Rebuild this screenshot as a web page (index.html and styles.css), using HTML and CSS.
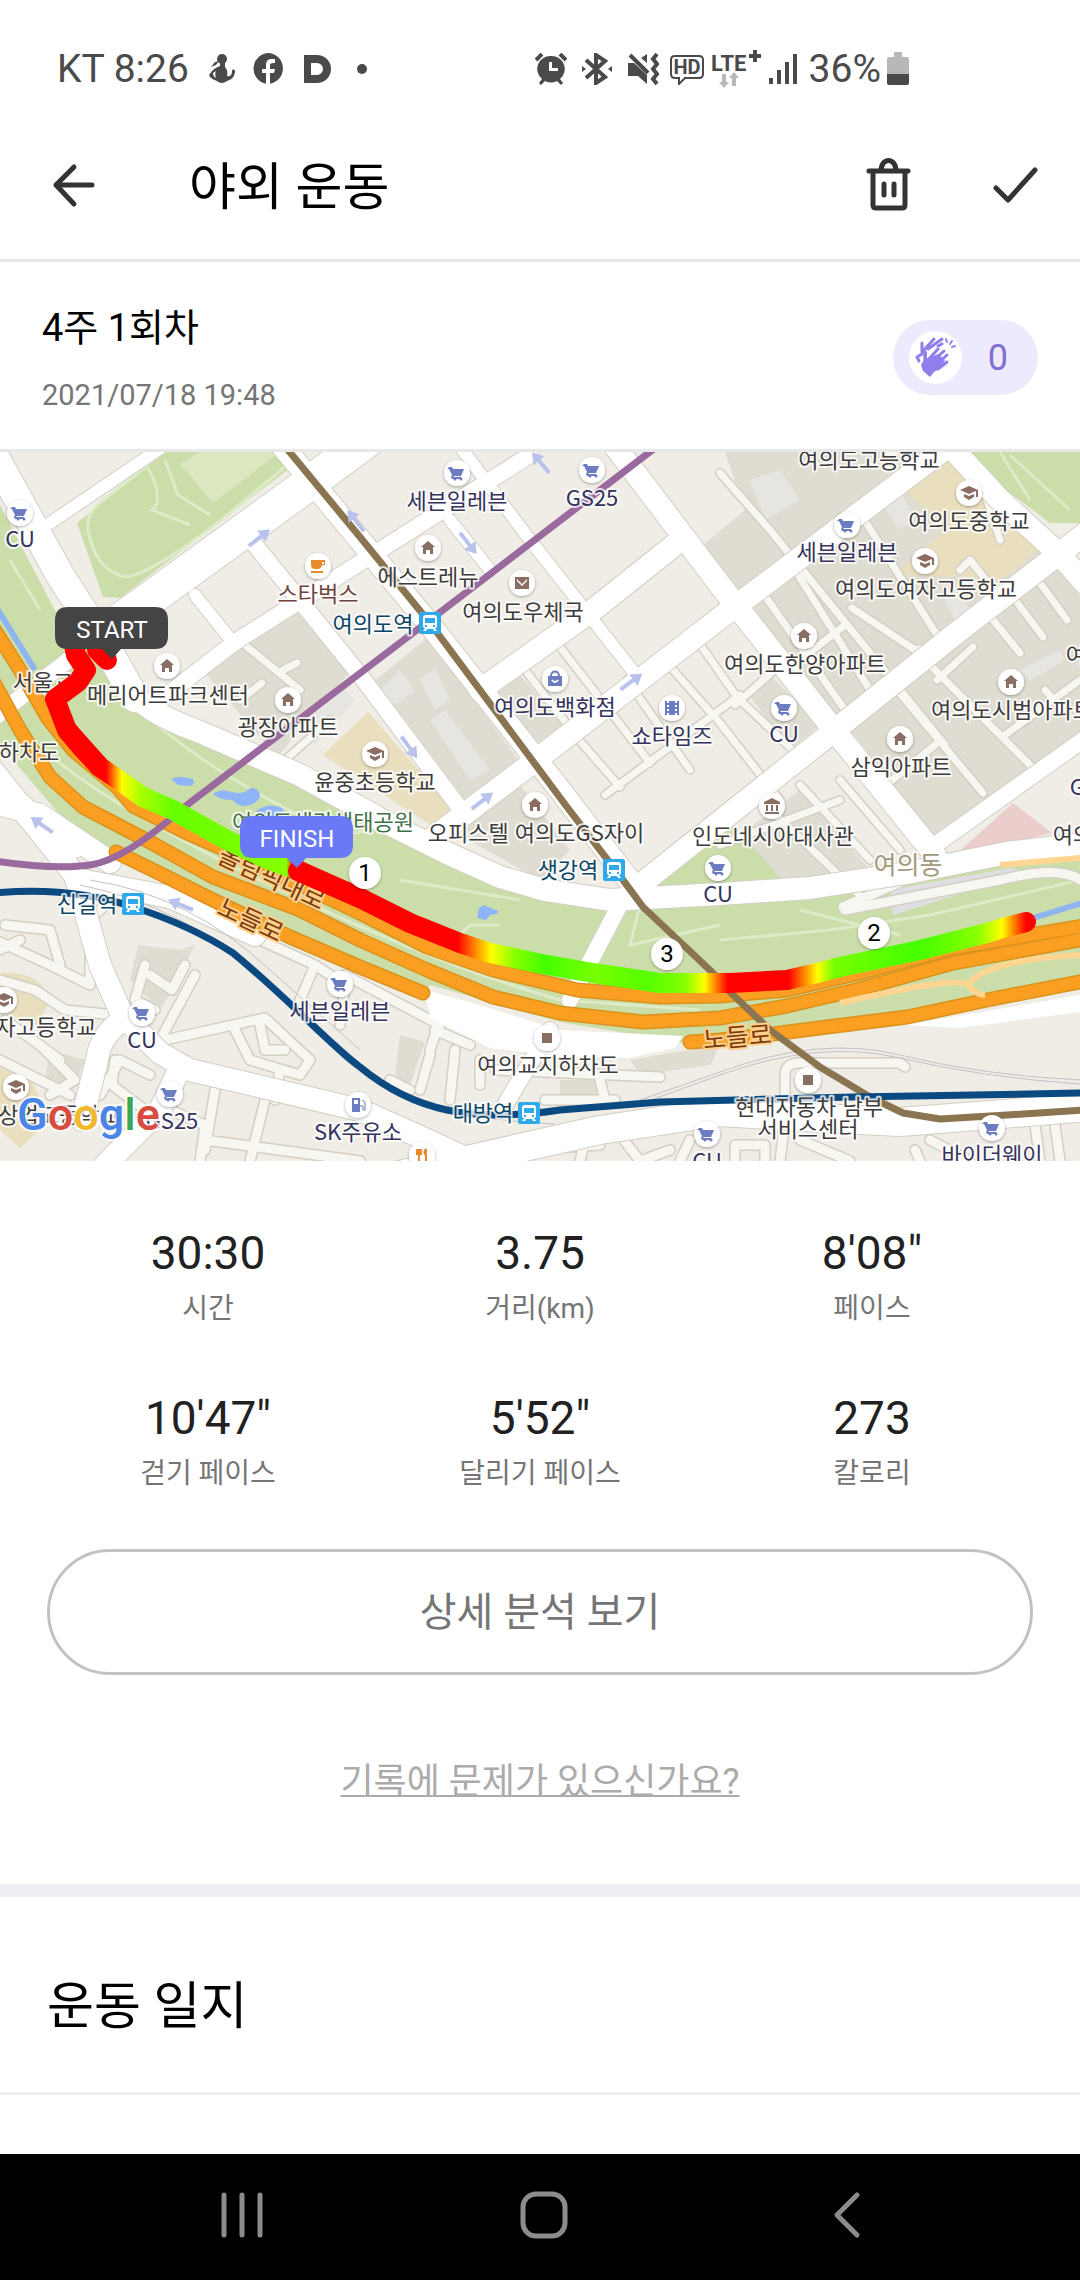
FILE: index.html
```html
<!DOCTYPE html>
<html lang="ko">
<head>
    <meta charset="UTF-8">
    <meta name="viewport" content="width=device-width, initial-scale=1.0">
    <title>야외 운동</title>
    <link rel="stylesheet" href="styles.css">
</head>
<body>
    <div class="status-bar">
        <div class="status-group">
            <span class="status-text">KT 8:26</span>
            <svg class="status-icon" width="32" height="32" viewBox="0 0 32 32">
                <circle cx="17" cy="6" r="5"/>
                <path d="M15 10h5v4c2 2 3 5 2 9 4 1 5-2 5-5 0-2 3-2 3 0 0 6-4 9-8 10-4 3-8 2-10 0-3-1-7-3-8-6 3-5 7-8 11-9zM8 20c0 2 1 4 3 5-1-3-1-5 0-7z"/>
                <path d="M6 14l4-5 4-1-3 4z"/>
            </svg>
            <svg class="status-icon" width="32" height="32" viewBox="0 0 32 32">
                <path d="M16 0a15.500 15.500 0 0 0-3 30.700V20H9v-4h4v-4c0-4 2-6 6-6h3v4h-2c-2 0-3 1-3 2v4h5l-1 4h-4v10.700A15.500 15.500 0 0 0 16 0z"/>
            </svg>
            <svg class="status-icon" width="32" height="32" viewBox="0 0 32 32">
                <path fill-rule="evenodd" d="M3 2h13a14 14 0 0 1 0 28H3zM10 10v12h6a6 6 0 0 0 0-12z"/>
            </svg>
            <svg class="status-icon" width="32" height="32" viewBox="0 0 32 32"><circle cx="13" cy="16" r="5"/></svg>
        </div>
        <div class="status-group status-right">
            <svg class="status-icon" width="32" height="32" viewBox="0 0 32 32">
                <path fill-rule="evenodd" d="M16 3a13 13 0 0 1 9 23l3 4-2 2-4-4a13 13 0 0 1-12 0l-4 4-2-2 3-4A13 13 0 0 1 16 3zm-2 6v9h9v-3h-6V9z"/>
                <path class="line" d="M1 7l6-6M31 7l-6-6"/>
            </svg>
            <svg class="status-icon" width="32" height="32" viewBox="0 0 32 32">
                <path class="line" d="M5 7l19 17-9 6V2l9 6L5 25"/>
                <path d="M1 13l4 3-4 3zM31 13l-4 3 4 3z"/>
            </svg>
            <svg class="status-icon" width="32" height="32" viewBox="0 0 32 32">
                <path d="M1 10h6l13 12v9l-9-8H1zM20 1v9l-6-5z"/>
                <path class="line" d="M3 2l18 18M30 1l-4 5 4 5-4 5 4 5-4 5 4 5"/>
            </svg>
        </div>
        <div class="status-group status-tight">
            <svg class="status-icon" width="36" height="32" viewBox="0 0 36 32">
                <path class="thin" d="M6 3h24q4 0 4 4v14q0 4-4 4H16l-6 6v-6H6q-4 0-4-4V7q0-4 4-4z"/>
                <text class="hd-text" x="18" y="21">HD</text>
            </svg>
            <svg class="status-icon" width="50" height="40" viewBox="0 0 50 40">
                <text class="lte-text" x="0" y="22">LTE</text>
                <path class="line" d="M38 7h12M44 1v12"/>
                <path class="faded" d="M11 25h4v8h3l-5 6-5-6h3zM21 37h4v-8h3l-5-6-5 6h3z"/>
            </svg>
            <svg class="status-icon" width="36" height="32" viewBox="0 0 36 32">
                <path class="line" d="M4 31v-6M12 31V17M20 31V9M28 31V1"/>
            </svg>
            <span class="status-text">36%</span>
            <svg class="status-icon" width="22" height="34" viewBox="0 0 22 34">
                <path class="faded" d="M7 0h8v5h5q2 0 2 2v16H0V7q0-2 2-2h5z"/>
                <path d="M0 22h22v9q0 2-2 2H2q-2 0-2-2z"/>
            </svg>
        </div>
    </div>

    <header class="app-bar">
        <button type="button" class="icon-button" aria-label="뒤로">
            <svg width="55" height="55" viewBox="0 0 55 55"><path d="M46 27H10M28 9L10 27l18 19"/></svg>
        </button>
        <h1>야외 운동</h1>
        <button type="button" class="icon-button" aria-label="삭제">
            <svg width="55" height="55" viewBox="0 0 55 55"><path d="M8 13h39M12 13v34q0 3 3 3h26q3 0 3-3V13M20 13c0-14 15-14 15 0M23 26v11M33 26v11"/></svg>
        </button>
        <button type="button" class="icon-button" aria-label="확인">
            <svg width="55" height="55" viewBox="0 0 55 55"><path d="M8 30l12 12 27-30"/></svg>
        </button>
    </header>

    <main>
        <section class="summary">
            <div>
                <h2>4주 1회차</h2>
                <p class="date">2021/07/18 19:48</p>
            </div>
            <button type="button" class="clap">
                <svg width="53" height="53" viewBox="0 0 53 53">
                    <circle cx="26.500" cy="26.500" r="26.500" fill="#fff"/>
                    <path d="M14 21q2-3 4 0v7l11-5 7 6-4 8-7 4-4 5-7-6-2-6 3-5z" fill="#927fee"/>
                    <g fill="none" stroke="#927fee" stroke-width="3" stroke-linecap="round" stroke-linejoin="round">
                        <path d="M19 29l10-11M23 31l12-11M27 34l11-10M29 38l9-7M16 32v-11"/>
                        <path d="M10 30l-2-4 5-3M13 22V12M14 20L25 8M19 18L33 8M29 15l4-2"/>
                        <path d="M38 11l-1-3M41 13l2-3M43 16l3-1" stroke-width="2"/>
                    </g>
                </svg>
                <span>0</span>
            </button>
        </section>

        <svg class="map" viewBox="0 452 1080 709" role="img" aria-label="운동 경로 지도">
            <defs>
                <linearGradient id="pace" gradientUnits="userSpaceOnUse" x1="0" y1="0" x2="1080" y2="0">
                    <stop offset="0.098" stop-color="#f00"/>
                    <stop offset="0.113" stop-color="#ff0"/>
                    <stop offset="0.130" stop-color="#af0"/>
                    <stop offset="0.160" stop-color="#6f0"/>
                    <stop offset="0.265" stop-color="#8f0"/>
                    <stop offset="0.272" stop-color="#f00"/>
                    <stop offset="0.424" stop-color="#f00"/>
                    <stop offset="0.442" stop-color="#f90"/>
                    <stop offset="0.455" stop-color="#ff0"/>
                    <stop offset="0.477" stop-color="#8f0"/>
                    <stop offset="0.505" stop-color="#4f0"/>
                    <stop offset="0.550" stop-color="#7f0"/>
                    <stop offset="0.600" stop-color="#5f0"/>
                    <stop offset="0.635" stop-color="#8f0"/>
                    <stop offset="0.652" stop-color="#ff0"/>
                    <stop offset="0.674" stop-color="#f00"/>
                    <stop offset="0.730" stop-color="#f00"/>
                    <stop offset="0.745" stop-color="#f80"/>
                    <stop offset="0.757" stop-color="#ff0"/>
                    <stop offset="0.772" stop-color="#7f0"/>
                    <stop offset="0.850" stop-color="#4f0"/>
                    <stop offset="0.905" stop-color="#8f0"/>
                    <stop offset="0.928" stop-color="#ff0"/>
                    <stop offset="0.950" stop-color="#f00"/>
                </linearGradient>
                <filter id="shadow" x="-50%" y="-50%" width="200%" height="200%">
                    <feDropShadow dx="0" dy="1" stdDeviation="1.500" flood-opacity="0.350"/>
                </filter>

                <circle id="disc" r="13" fill="#fff" filter="url(#shadow)"/>
                <g id="cart">
                    <use href="#disc"/>
                    <path fill="#6c7cc0" d="M-8-6h3l1 2h11l-3 7h-7l-1 1h8v2h-9l-1-2 1-2-3-6h-2z"/>
                    <circle cx="-2" cy="6" r="1.500" fill="#6c7cc0"/><circle cx="4" cy="6" r="1.500" fill="#6c7cc0"/>
                </g>
                <g id="home"><use href="#disc"/><path fill="#8a6d63" d="M0-7l7 6H5v7H2V2h-4v4h-3v-7h-2z"/></g>
                <g id="school"><use href="#disc"/><path fill="#8a6d63" d="M0-7l9 4v7H7v-6L0 1l-9-4zM-5 1l5 2 5-2v3L0 7l-5-3z"/></g>
                <g id="place"><use href="#disc"/><path fill="#8a6d63" d="M-5-5H5V5H-5z"/></g>
                <g id="mail"><use href="#disc"/><path fill="#8a6d63" fill-rule="evenodd" d="M-7-6H7V6H-7zM-5-4l5 5 5-5v2L0 3l-5-5z"/></g>
                <g id="museum"><use href="#disc"/><path fill="#8a6d63" d="M0-8l8 4v2H-8v-2zM-6-1h2v6h-2zM-1-1h2v6h-2zM4-1h2v6H4zM-7 6H7v2H-7z"/></g>
                <g id="bag"><use href="#disc"/><path fill="#6c7cc0" d="M-7-3H7V7H-7z"/><path d="M-4-3c0-6 8-6 8 0" fill="none" stroke="#6c7cc0" stroke-width="2"/><path d="M-3 1q3 4 6 0" fill="none" stroke="#fff" stroke-width="2"/></g>
                <g id="film"><use href="#disc"/><path fill="#6c7cc0" fill-rule="evenodd" d="M-7-7h2v2h2v-2h6v2h2v-2h2V7H5V5H3v2h-6V5h-2v2h-2zM-5-3v2h2v-2zM-5 1v2h2V1zM3-3v2h2v-2zM3 1v2h2V1z"/></g>
                <g id="coffee"><use href="#disc"/><path fill="#e8892b" fill-rule="evenodd" d="M-7-6H7v5H4q-1 4-4 4h-3q-4 0-4-4zM4-4v2h2v-2zM-7 5H5v2H-7z"/></g>
                <g id="gas"><use href="#disc"/><path fill="#6c7cc0" fill-rule="evenodd" d="M-6-7h8V7h-8zM-4-5v4h4v-4z"/><path d="M2 1h3v4h2v-8L4-5" fill="none" stroke="#6c7cc0" stroke-width="1"/></g>
                <g id="food"><use href="#disc"/><path d="M-5-6v5h4v-5M-3-6V7M4-6V7M4-6q-3 3 0 7" fill="none" stroke="#e8892b" stroke-width="2"/></g>
                <g id="station">
                    <rect x="-11" y="-11" width="22" height="22" rx="2" fill="#2fa9ea"/>
                    <path fill="#fff" fill-rule="evenodd" d="M-4-8h8q3 0 3 3V3q0 2-2 2l2 3H4L3 6h-6l-1 2h-3l2-3q-2 0-2-2v-8q0-3 3-3zM-5-5v5H5v-5zM-5 2v2h2V2zM3 2v2h2V2z"/>
                </g>
                <path id="arrow" d="M-13-2H3v-5L14 0 3 7V2h-16z" fill="#b9c2ec"/>

                <!-- streets: drawn twice, casing first -->
                <g id="minor">
                    <path class="w8" d="M720 473L770 530 945 745M787 557L870 690M763 593L845 710M860 513L940 640M897 690L983 793M922 657L1035 770M1013 597L1043 637M1040 583L1067 620M993 620L1020 653M937 680L973 647M1045 690L1063 710M852 608L915 650 940 645M735 705L780 665M800 660L845 625M880 790L935 745M1005 735L1080 680"/>
                    <path class="w8" d="M560 647L650 763M573 733L620 787M627 680L690 770M667 663L720 723 780 800M697 640L737 697 803 760M525 670L577 737M605 795L740 695M720 845L840 800M760 800L865 900M800 785L870 860M840 780L900 850"/>
                    <path class="w8" d="M245 645L300 690M283 670L297 663M240 700L262 683M285 760L330 720M980 478L1000 540M960 570L970 560 990 585"/>
                    <path class="w10" d="M0 942L50 965 90 985 90 920 110 900M20 940L0 950M60 965L50 930 5 925M0 980L35 990 65 1010 115 1015M60 1060L5 1020M40 1045L75 1080 50 1095M0 1060L70 1095M100 1095L120 1060 150 1075M115 1060L112 1085 145 1110"/>
                    <path class="w10" d="M165 1040L210 1030 265 1018 310 1060 300 1075 250 1060 235 1030M280 1070L275 1100M260 1025L265 1050 285 1050M145 965L135 1000 155 1010M150 975L172 990 185 965M195 975L160 1040M215 1090L205 1150M180 1080L170 1110 205 1125 200 1161M265 1100L250 1161M205 1140L360 1161"/>
                    <path class="w10" d="M260 940L315 965 300 1000M315 965L345 985 340 1025M345 975L440 1025 435 1030 470 1045M440 1020L430 1050M430 1055L420 1090M390 1080L410 1090M455 1050L450 1100M480 1060L480 1085M495 1070L660 1077M600 1080L605 1100M545 1100L615 1100M585 1140L580 1161M620 1135L640 1161M520 1150L600 1145M670 1150L640 1161"/>
                    <path class="w10" d="M785 1110V1075Q785 1063 800 1063H900L905 1067M843 907L905 880M845 910L1000 880Q1060 865 1080 880M780 1161L785 1120M800 1140L850 1161M930 1140L970 1161M1035 1125L1040 1161M1055 1125L1060 1161M915 1150L920 1161M680 1161L690 1140M735 1161V1145H765V1161"/>
                </g>
                <g id="major">
                    <path class="w28" d="M-20 430L60 575 108 650 135 698"/>
                    <path class="w22" d="M130 690Q145 712 200 732L300 775 393 826 447 853 500 877 545 890 610 900 720 894 810 888 907 873 1007 853 1090 843"/>
                    <path class="w34" d="M118 622L300 490 370 438"/>
                    <path class="w12" d="M50 523L165 445M195 595L235 645M450 520L490 570M455 440L530 540 640 680"/>
                    <path class="w16" d="M160 700L235 642 530 455M255 545L360 675 465 815M935 845L1090 735M550 1030L505 1105M625 895L570 1000"/>
                    <path class="w22" d="M480 690L593 610 677 543M430 840L527 767 720 618 950 445M640 885L835 730 960 630 1090 530M265 425L430 625 560 790 635 888M605 433L720 585 830 725 935 855M935 430L1000 500 1060 555 1100 600"/>
                    <path class="w16" d="M-5 717L75 655M-20 750L20 800 75 850"/>
                    <path class="w22" d="M-10 802L40 815 110 862M-10 770L75 875 100 965 122 1015 160 1053 190 1070 360 1110 427 1140 480 1165M80 880L170 897 255 935M125 1018Q100 1035 97 1060L82 1120M180 1068L160 1110 105 1165"/>
                    <path class="w28" d="M400 1175L600 1130 720 1112 820 1118 900 1122 1090 1107"/>
                </g>
                <g id="highway">
                    <path class="w12" d="M-15 615L20 670 47 717 73 750 117 787 133 806 187 833 240 856 360 913 427 947 493 970 577 990 660 997 720 996 787 990 860 973 953 948 1090 925"/>
                    <path class="w12" d="M-12 672L20 730 50 777 83 807 150 842 213 877 300 910 360 940 427 970 493 997 560 1013 643 1022 720 1018 787 1006 860 989 953 963 1090 938"/>
                    <path class="w12" d="M116 852L167 877 213 900 290 937 360 967 423 993"/>
                    <path class="w12" d="M690 1042L720 1040 773 1034 827 1027 907 1017 987 1000 1090 980"/>
                </g>
            </defs>

            <rect class="land" y="452" width="1080" height="709"/>

            <!-- blocks and parks -->
            <g class="estate">
                <path d="M725 452H935L740 600 700 548 745 510z"/>
                <path d="M745 602L950 455 1080 575V740L930 845 840 735z"/>
                <path d="M366 688L428 637 522 765 470 808z"/>
                <path d="M200 667L290 603 350 672 277 757z"/>
                <path d="M497 690L520 675 565 728 530 748z"/>
                <path d="M745 690L770 675 820 725 790 750zM720 850L800 790 870 870 780 882z"/>
                <path d="M450 830L520 785 570 850 540 880z"/>
                <path d="M138 945L180 950 195 945 175 985 160 1010 130 980zM50 1050L85 1060 70 1095 45 1080zM400 1035L425 1042 410 1085 395 1075zM560 1080H600V1100H560zM630 1060L720 1045 710 1065 640 1075z"/>
            </g>
            <g class="buildings">
                <path d="M380 690L400 670 415 690 395 705zM420 680L435 668 450 700 435 710zM430 720L445 710 490 770 470 780zM300 725L345 690 355 700 315 745zM750 480L780 470 800 500 765 520zM880 500L900 490 915 520 900 530zM855 735L885 775 875 785 850 745zM1020 670L1060 650 1065 660 1030 680zM945 600L960 590 970 610 955 622z"/>
            </g>
            <g class="school-ground">
                <path d="M323 755L368 712 455 812 435 828z"/>
                <path d="M895 478L950 452 1042 547 1003 578 895 575 945 530z"/>
                <path d="M0 973Q40 970 50 1000L37 1027 0 1010zM0 1067L33 1083 50 1120 20 1148 0 1130z"/>
            </g>
            <path fill="#ebcdcc" d="M953 857L1013 803 1052 833z"/>
            <g class="park">
                <path d="M0 505L60 620 105 660 140 705 300 775 393 830 500 880 610 905 800 893 1010 855 1080 845V985L900 1022 700 1046 560 1022 430 985 420 998 290 945 110 852 60 815 0 745z"/>
                <path d="M77 523L165 452H293L290 468 120 598 103 597z"/>
                <path d="M963 452H1080V523H1050L1010 493z"/>
                <path d="M640 890L700 848 727 818 785 883z"/>
            </g>
            <path fill="#dce7c1" d="M180 464L200 452H280L213 503z"/>
            <path class="trail" d="M148 465L110 495Q85 510 88 530Q95 570 125 577Q165 572 290 462M148 468Q165 500 152 510L190 525M165 460L178 495 210 515M10 560L40 610M15 720Q60 780 240 870 420 960 560 1000L700 1010M130 700Q200 770 330 830 360 840 380 820M400 880L520 900M460 935L470 925 500 925M640 905L630 945 720 925M720 940L830 930 930 915 1080 880M800 910L900 935M1000 452L1030 500M1010 455L1070 510"/>
            <path fill="#dfdfe3" d="M890 890L1010 868 1030 872 893 915z"/>
            <g class="water">
                <path d="M171 779Q178 775 193 779 196 784 190 786L178 785zM213 794Q220 788 232 792 245 795 250 788 260 788 260 796 258 804 245 806 238 806 232 800 220 800 213 794zM256 811Q266 803 280 807 290 812 274 818L262 818zM479 908L484 905 498 911Q500 914 490 915L486 920 477 918z"/>
            </g>
            <path class="stream" d="M-5 605L35 670M1030 919L1085 902"/>

            <use href="#minor" class="casing"/>
            <use href="#minor" class="fill-minor"/>
            <use href="#major" class="casing"/>
            <use href="#major" class="fill-major"/>
            <path fill="#fff" d="M425 990L473 1003 560 1030 683 1036 675 1048 630 1058 560 1056 490 1048 430 1018zM905 1025L1080 995V1012L960 1028z"/>
            <use href="#highway" class="casing-orange"/>
            <use href="#highway" class="fill-orange"/>
            <path class="ramp" d="M840 1003Q960 975 968 985T985 995M968 985Q985 960 1080 955M1000 865L1080 858"/>

            <!-- rail -->
            <path class="rail" d="M80 885Q180 905 260 975L345 1060Q420 1120 555 1124M90 880Q190 895 270 970L360 1050M640 1100L720 1072Q820 1035 900 1055T1080 1080M640 1104L720 1075Q820 1039 900 1058T1080 1084"/>
            <path class="metro brown" d="M288 450L360 537 430 623 567 807 623 880 643 907 713 973 730 992 770 1030 820 1067 870 1097 903 1113 940 1119 1007 1115 1085 1110"/>
            <path class="metro blue" d="M-5 893Q70 886 133 907Q190 925 233 953C290 1000 330 1045 360 1067Q400 1100 447 1110T560 1110L660 1102 853 1097 1085 1093"/>
            <path class="metro purple" d="M655 448L430 620 183 808Q125 860 90 865T-5 861"/>

            <use href="#arrow" transform="translate(259 538) rotate(-38)"/>
            <use href="#arrow" transform="translate(541 463) rotate(-130)"/>
            <use href="#arrow" transform="translate(468 543) rotate(52)"/>
            <use href="#arrow" transform="translate(631 682) rotate(-36)"/>
            <use href="#arrow" transform="translate(409 747) rotate(54)"/>
            <use href="#arrow" transform="translate(482 801) rotate(-38)"/>
            <use href="#arrow" transform="translate(356 521) rotate(-128)"/>
            <use href="#arrow" transform="translate(42 825) rotate(-145)"/>
            <use href="#arrow" transform="translate(181 905) rotate(-158)"/>

            <g>
                <use href="#cart" x="20" y="513"/>
                <use href="#cart" x="457" y="473"/>
                <use href="#cart" x="592" y="470"/>
                <use href="#cart" x="847" y="525"/>
                <use href="#cart" x="784" y="708"/>
                <use href="#cart" x="718" y="868"/>
                <use href="#cart" x="340" y="984"/>
                <use href="#cart" x="142" y="1013"/>
                <use href="#cart" x="170" y="1094"/>
                <use href="#cart" x="707" y="1134"/>
                <use href="#cart" x="992" y="1128"/>
                <use href="#coffee" x="318" y="566"/>
                <use href="#home" x="167" y="666"/>
                <use href="#home" x="288" y="700"/>
                <use href="#home" x="428" y="548"/>
                <use href="#home" x="804" y="636"/>
                <use href="#home" x="1011" y="682"/>
                <use href="#home" x="900" y="739"/>
                <use href="#home" x="535" y="805"/>
                <use href="#mail" x="522" y="583"/>
                <use href="#bag" x="555" y="679"/>
                <use href="#film" x="672" y="708"/>
                <use href="#school" x="375" y="754"/>
                <use href="#school" x="969" y="493"/>
                <use href="#school" x="925" y="561"/>
                <use href="#school" x="4" y="1000"/>
                <use href="#school" x="16" y="1087"/>
                <use href="#museum" x="772" y="806"/>
                <use href="#place" x="547" y="1038"/>
                <use href="#place" x="808" y="1080"/>
                <use href="#gas" x="358" y="1105"/>
                <use href="#food" x="422" y="1155"/>
                <use href="#station" x="430" y="623"/>
                <use href="#station" x="614" y="870"/>
                <use href="#station" x="133" y="904"/>
                <use href="#station" x="529" y="1113"/>
            </g>

            <g class="label">
                <text x="869" y="468">여의도고등학교</text>
                <text x="969" y="529">여의도중학교</text>
                <text x="926" y="597">여의도여자고등학교</text>
                <text x="805" y="672">여의도한양아파트</text>
                <text x="1012" y="718">여의도시범아파트</text>
                <text x="901" y="775">삼익아파트</text>
                <text x="1096" y="663">여의도</text>
                <text x="1083" y="843">여의도</text>
                <text x="428" y="585">에스트레뉴</text>
                <text x="523" y="620">여의도우체국</text>
                <text x="375" y="790">윤중초등학교</text>
                <text x="43" y="690">서울교</text>
                <text x="168" y="703">메리어트파크센터</text>
                <text x="288" y="735">광장아파트</text>
                <text x="29" y="760">하차도</text>
                <text x="536" y="841">오피스텔 여의도GS자이</text>
                <text x="773" y="844">인도네시아대사관</text>
                <text x="46" y="1035">자고등학교</text>
                <text x="59" y="1123">상업고등학교</text>
                <text x="548" y="1073">여의교지하차도</text>
                <text x="809" y="1115">현대자동차 남부</text>
                <text x="808" y="1137">서비스센터</text>
            </g>
            <g class="label shop">
                <text x="20" y="547">CU</text>
                <text x="457" y="509">세븐일레븐</text>
                <text x="592" y="506">GS25</text>
                <text x="555" y="715">여의도백화점</text>
                <text x="672" y="744">쇼타임즈</text>
                <text x="847" y="560">세븐일레븐</text>
                <text x="784" y="742">CU</text>
                <text x="1096" y="795">GS25</text>
                <text x="718" y="902">CU</text>
                <text x="340" y="1019">세븐일레븐</text>
                <text x="142" y="1048">CU</text>
                <text x="172" y="1129">GS25</text>
                <text x="358" y="1140">SK주유소</text>
                <text x="707" y="1169">CU</text>
                <text x="992" y="1163">바이더웨이</text>
            </g>
            <g class="label transit">
                <text x="373" y="632">여의도역</text>
                <text x="568" y="878">샛강역</text>
                <text x="87" y="912">신길역</text>
                <text x="483" y="1121">대방역</text>
            </g>
            <text class="label food-name" x="318" y="602">스타벅스</text>
            <text class="label park-name" x="323" y="830">여의도샛강생태공원</text>
            <text class="label district" x="908" y="874">여의동</text>
            <g class="label road-name">
                <text transform="translate(268 886) rotate(25)">올림픽대로</text>
                <text transform="translate(247 928) rotate(25)">노들로</text>
                <text transform="translate(738 1046) rotate(-5)">노들로</text>
            </g>

            <!-- recorded route -->
            <path class="route" stroke="#f00" d="M73 640L76 655 86 670 78 682 55 699 67 730 100 767M97 650L107 660"/>
            <path class="route" stroke="url(#pace)" d="M67 730L82 748 100 767 123 783 143 797 173 810 227 840 267 859 300 871 360 898 410 923 460 943 490 953 537 963 593 973 660 983 703 983 730 983 787 980 817 973 840 967 920 950 987 933 1003 928 1026 922"/>
            <path class="route" stroke="#f00" d="M298 871L360 898"/>

            <g class="km">
                <circle cx="365" cy="873" r="16"/><text x="365" y="881">1</text>
                <circle cx="874" cy="933" r="16"/><text x="874" y="941">2</text>
                <circle cx="667" cy="954" r="16"/><text x="667" y="962">3</text>
            </g>
            <g class="flag">
                <path fill="#444" d="M68 607H155Q168 607 168 620V636Q168 649 155 649H121L112 659 102 649H68Q55 649 55 636V620Q55 607 68 607z"/>
                <text x="112" y="638">START</text>
                <path fill="#6979f8" d="M253 816H340Q353 816 353 829V845Q353 858 340 858H306L297 868 287 858H253Q240 858 240 845V829Q240 816 253 816z"/>
                <text x="297" y="847">FINISH</text>
            </g>
            <text class="google" x="17" y="1130"><tspan fill="#4a86e8">G</tspan><tspan fill="#d94c3d">o</tspan><tspan fill="#f2b92c">o</tspan><tspan fill="#4a86e8">g</tspan><tspan fill="#3aa757">l</tspan><tspan fill="#d94c3d">e</tspan></text>
        </svg>

        <dl class="stats">
            <div><dd>30:30</dd><dt>시간</dt></div>
            <div><dd>3.75</dd><dt>거리(km)</dt></div>
            <div><dd>8'08"</dd><dt>페이스</dt></div>
            <div><dd>10'47"</dd><dt>걷기 페이스</dt></div>
            <div><dd>5'52"</dd><dt>달리기 페이스</dt></div>
            <div><dd>273</dd><dt>칼로리</dt></div>
        </dl>

        <div class="actions">
            <button type="button" class="detail-button">상세 분석 보기</button>
            <a href="#" class="report-link">기록에 문제가 있으신가요?</a>
        </div>

        <section class="diary">
            <h2>운동 일지</h2>
        </section>
    </main>

    <nav class="nav-bar">
        <button type="button" aria-label="최근 앱">
            <svg width="48" height="48" viewBox="0 0 48 48"><path d="M6 4v40M24 4v40M42 4v40"/></svg>
        </button>
        <button type="button" aria-label="홈">
            <svg width="48" height="48" viewBox="0 0 48 48"><rect x="3" y="3" width="42" height="42" rx="13"/></svg>
        </button>
        <button type="button" aria-label="뒤로">
            <svg width="48" height="48" viewBox="0 0 48 48"><path d="M34 4L14 24l20 20"/></svg>
        </button>
    </nav>
</body>
</html>
```

FILE: styles.css
```css
* {
    box-sizing: border-box;
}
body {
    margin: 0;
    min-height: 100vh;
    display: flex;
    flex-direction: column;
    background: #fff;
    color: #000;
    font-family: Roboto, "Noto Sans CJK KR", sans-serif;
}
h1, h2, p, dl, dd {
    margin: 0;
    font-weight: 400;
}
button {
    border: none;
    background: none;
    padding: 0;
    font-family: inherit;
    cursor: pointer;
}
svg {
    display: block;
    flex: none;
}

/* Phone status bar */
.status-bar {
    display: flex;
    align-items: center;
    gap: 10px;
    padding: 45px 171px 19px 57px;
    color: #4a4a4a;
}
.status-group {
    display: flex;
    align-items: center;
    gap: 16px;
}
.status-right {
    gap: 14px;
    margin-left: auto;
}
.status-tight {
    gap: 6px;
}
.status-text {
    font-size: 39px;
    line-height: 48px;
}
.status-icon {
    fill: #4a4a4a;
}
.status-icon .line {
    fill: none;
    stroke: #4a4a4a;
    stroke-width: 4;
}
.status-icon .thin {
    fill: none;
    stroke: #4a4a4a;
    stroke-width: 2;
}
.status-icon .faded {
    fill: #b8b8b8;
}
.hd-text {
    font-size: 20px;
    font-weight: 700;
    text-anchor: middle;
}
.lte-text {
    font-size: 22px;
    font-weight: 700;
}

/* App bar */
.app-bar {
    display: flex;
    align-items: center;
    padding: 46px 37px 46px 46px;
    border-bottom: 3px solid #e8e8e8;
}
.app-bar h1 {
    flex: 1;
    margin-left: 88px;
    padding-top: 5px;
    font-size: 51px;
    line-height: 50px;
}
.icon-button {
    margin-left: 72px;
}
.icon-button:first-child {
    margin-left: 0;
}
.icon-button path {
    fill: none;
    stroke: #333;
    stroke-width: 5;
    stroke-linecap: round;
    stroke-linejoin: round;
}

/* Workout summary */
.summary {
    display: flex;
    align-items: center;
    justify-content: space-between;
    padding: 38px 42px 34px;
    border-bottom: 3px solid #e8e8e8;
}
.summary h2 {
    font-size: 38px;
    line-height: 56px;
}
.date {
    margin-top: 19px;
    color: #757575;
    font-size: 29px;
    line-height: 40px;
}
.clap {
    display: flex;
    align-items: center;
    gap: 26px;
    padding: 11px 30px 11px 16px;
    border-radius: 38px;
    background: #edeafd;
    color: #8070d0;
    font-size: 36px;
}

/* Map */
.map {
    width: 100%;
    height: auto;
}
.land {
    fill: #f0ece6;
}
.estate {
    fill: #dfdcd1;
}
.buildings {
    fill: #e6e5e2;
}
.school-ground {
    fill: #e9dfbf;
}
.park {
    fill: #cbdeaa;
}
.water {
    fill: #8fb5f9;
}
.trail {
    fill: none;
    stroke: #deebc8;
    stroke-width: 3;
}
.stream {
    fill: none;
    stroke: #8fb5f0;
    stroke-width: 6;
}
.w8 { --w: 8px; }
.w10 { --w: 10px; }
.w12 { --w: 12px; }
.w16 { --w: 16px; }
.w22 { --w: 22px; }
.w28 { --w: 28px; }
.w34 { --w: 34px; }
#minor path, #major path, #highway path {
    fill: none;
    stroke-width: calc(var(--w) + var(--edge));
    stroke-linecap: round;
    stroke-linejoin: round;
}
.casing {
    --edge: 2px;
    stroke: #d3cfc4;
}
.fill-minor {
    --edge: -1px;
    stroke: #f8f6f1;
}
.fill-major {
    --edge: 0px;
    stroke: #fff;
}
.casing-orange {
    --edge: 3px;
    stroke: #d9931c;
}
.fill-orange {
    --edge: 0px;
    stroke: #fa9f22;
}
.ramp {
    fill: none;
    stroke: #ffd592;
    stroke-width: 6;
}
.rail {
    fill: none;
    stroke: #c2c2c2;
    stroke-width: 1;
}
.metro {
    fill: none;
    stroke-width: 7;
    stroke-linejoin: round;
}
.brown {
    stroke: #8a7550;
}
.blue {
    stroke: #0b4a80;
}
.purple {
    stroke: #9a6a9e;
}
.label {
    font-family: "Noto Sans CJK KR", sans-serif;
    font-size: 22px;
    text-anchor: middle;
    fill: #3c3c3c;
    stroke: rgba(255, 255, 255, 0.8);
    stroke-width: 4;
    stroke-linejoin: round;
    paint-order: stroke;
}
.shop {
    fill: #33335c;
}
.transit {
    fill: #0a4566;
}
.food-name {
    fill: #70443c;
}
.park-name {
    fill: #40704a;
}
.district {
    font-size: 25px;
    fill: #a3987c;
}
.road-name {
    font-size: 25px;
    fill: #7a3c0c;
    stroke: #ffcf8c;
}
.route {
    fill: none;
    stroke-width: 20;
    stroke-linecap: round;
    stroke-linejoin: round;
}
.km circle {
    fill: #fff;
    filter: url(#shadow);
}
.km text {
    font-size: 24px;
    text-anchor: middle;
}
.flag text {
    fill: #fff;
    font-size: 24px;
    text-anchor: middle;
}
.google {
    font-size: 45px;
    font-weight: 500;
    stroke: rgba(255, 255, 255, 0.8);
    stroke-width: 4;
    paint-order: stroke;
}

/* Stats */
.stats {
    display: grid;
    grid-template-columns: repeat(3, 1fr);
    row-gap: 62px;
    padding: 64px 42px 56px;
    text-align: center;
}
.stats div {
    display: flex;
    flex-direction: column;
    gap: 7px;
}
.stats dd {
    color: #212121;
    font-size: 46px;
    line-height: 56px;
}
.stats dt {
    padding-top: 2px;
    color: #757575;
    font-size: 28px;
    line-height: 38px;
}

.actions {
    display: flex;
    flex-direction: column;
    align-items: center;
    padding: 0 47px 76px;
}
.detail-button {
    width: 100%;
    padding: 33px 32px 31px;
    border: 3px solid #c2c2c2;
    border-radius: 63px;
    color: #757575;
    font-size: 40px;
    line-height: 56px;
}
.report-link {
    margin-top: 81px;
    color: #ababab;
    font-size: 36px;
    line-height: 52px;
    text-decoration-thickness: 2px;
}

/* Diary */
.diary {
    padding: 73px 47px 48px;
    border-top: 13px solid #eeeff3;
    border-bottom: 3px solid #eeeff3;
}
.diary h2 {
    font-size: 51px;
    line-height: 74px;
}

/* Phone navigation bar */
.nav-bar {
    display: flex;
    margin-top: auto;
    padding: 37px 82px 41px 91px;
    background: #000;
}
.nav-bar button {
    flex: 1;
    display: flex;
    justify-content: center;
}
.nav-bar svg {
    fill: none;
    stroke: #8c8c8c;
    stroke-width: 5;
    stroke-linecap: round;
    stroke-linejoin: round;
}
```
